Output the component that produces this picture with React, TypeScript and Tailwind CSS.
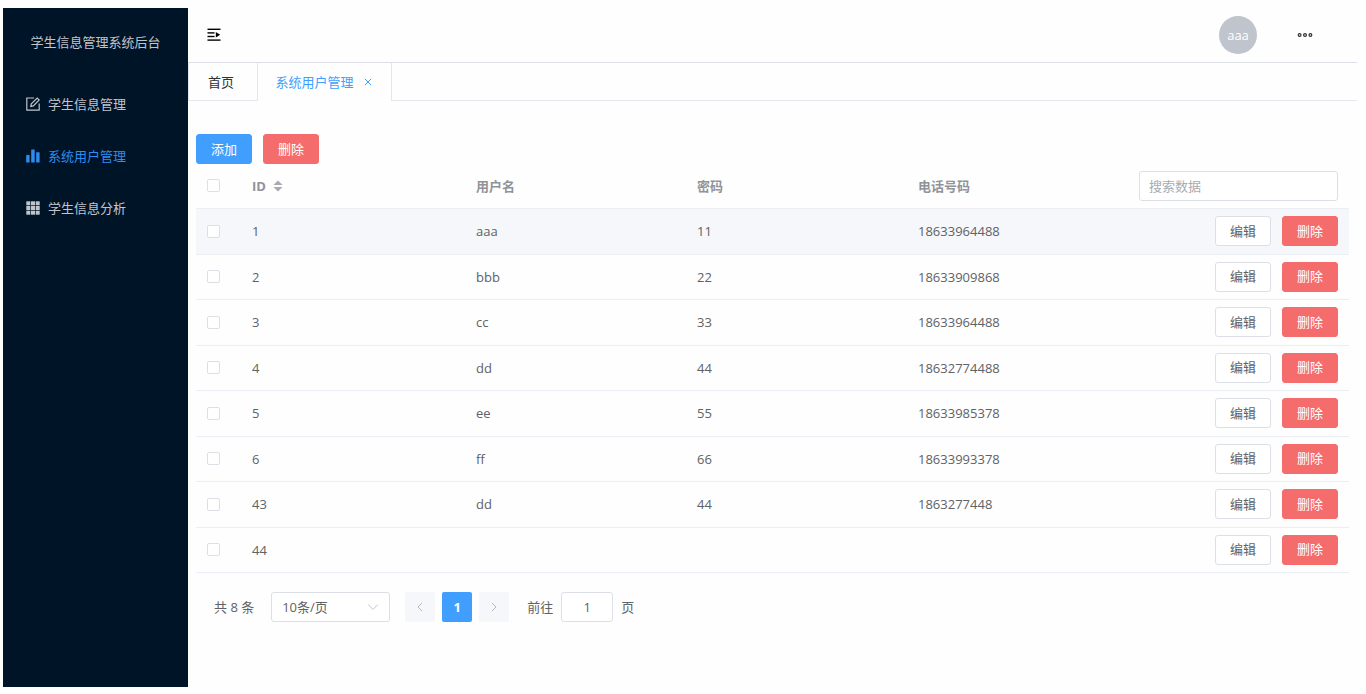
import { useState } from "react";
import type { ReactNode } from "react";

type User = {
  id: number;
  name: string;
  password: string;
  phone: string;
};

const users: User[] = [
  { id: 1, name: "aaa", password: "11", phone: "18633964488" },
  { id: 2, name: "bbb", password: "22", phone: "18633909868" },
  { id: 3, name: "cc", password: "33", phone: "18633964488" },
  { id: 4, name: "dd", password: "44", phone: "18632774488" },
  { id: 5, name: "ee", password: "55", phone: "18633985378" },
  { id: 6, name: "ff", password: "66", phone: "18633993378" },
  { id: 43, name: "dd", password: "44", phone: "1863277448" },
  { id: 44, name: "", password: "", phone: "" },
];

function EditIcon() {
  return (
    <svg viewBox="0 0 14 14" className="size-[14px]" fill="none" stroke="currentColor" strokeWidth="1.2">
      <path d="M8 1H0.8v12.2h12.4V6.4" />
      <path d="M4.8 9.4l.5-2.5L11.2 1l2 2-5.9 5.9z" />
    </svg>
  );
}

function BarsIcon() {
  return (
    <svg viewBox="0 0 14 14" className="size-[14px]" fill="currentColor">
      <rect x="0.2" y="6" width="3.4" height="7.6" rx="0.4" />
      <rect x="5.2" y="0.4" width="3.5" height="13.2" rx="0.4" />
      <rect x="10.2" y="3.2" width="3.4" height="10.4" rx="0.4" />
    </svg>
  );
}

function GridIcon() {
  return (
    <svg viewBox="0 0 14 14" className="size-[14px]" fill="currentColor">
      {[0.3, 5, 9.7].map((y) =>
        [0.3, 5, 9.7].map((x) => <rect key={`${x}-${y}`} x={x} y={y} width="4" height="4" />)
      )}
    </svg>
  );
}

function UnfoldIcon() {
  return (
    <svg viewBox="0 0 14 14" className="size-[14px]" fill="currentColor">
      <rect x="0.5" y="0.6" width="13" height="1.4" />
      <rect x="0.5" y="4.2" width="7" height="1.4" />
      <rect x="0.5" y="7.8" width="7" height="1.4" />
      <rect x="0.5" y="11.4" width="13" height="1.4" />
      <path d="M8.8 3.9l4.4 2.8-4.4 2.8z" />
    </svg>
  );
}

function MoreIcon() {
  return (
    <svg viewBox="0 0 16 6" className="h-[6px] w-[16px]" fill="none" stroke="currentColor" strokeWidth="1.2">
      <circle cx="2.6" cy="3" r="1.4" />
      <circle cx="8" cy="3" r="1.4" />
      <circle cx="13.4" cy="3" r="1.4" />
    </svg>
  );
}

function Chevron({ d, className }: { d: string; className?: string }) {
  return (
    <svg
      viewBox="0 0 12 12"
      className={["size-[12px]", className ?? ""].join(" ")}
      fill="none"
      stroke="currentColor"
      strokeWidth="1"
    >
      <path d={d} />
    </svg>
  );
}

const buttonKinds = {
  primary: "border-[#409eff] bg-[#409eff] text-white",
  danger: "border-[#f56c6c] bg-[#f56c6c] text-white",
  plain: "border-[#dcdfe6] bg-white text-[#606266]",
};

function Button({
  kind,
  onClick,
  children,
}: {
  kind: keyof typeof buttonKinds;
  onClick?: () => void;
  children: ReactNode;
}) {
  return (
    <button
      type="button"
      onClick={onClick}
      className={["h-[30px] w-14 cursor-pointer rounded-[3px] border pb-px leading-4", buttonKinds[kind]].join(" ")}
    >
      {children}
    </button>
  );
}

function Checkbox({ label, checked, onChange }: { label: string; checked: boolean; onChange: () => void }) {
  return (
    <input
      type="checkbox"
      aria-label={label}
      checked={checked}
      onChange={onChange}
      className="block size-[13px] appearance-none rounded-[2px] border border-[#dcdfe6] bg-white checked:border-[#409eff] checked:bg-[#409eff]"
    />
  );
}

const menu = [
  { label: "学生信息管理", icon: <EditIcon />, active: false },
  { label: "系统用户管理", icon: <BarsIcon />, active: true },
  { label: "学生信息分析", icon: <GridIcon />, active: false },
];

function Sidebar() {
  return (
    <aside className="w-[185px] shrink-0 bg-[#001428] text-[#c0c4cc]">
      <h1 className="h-[70px] text-center leading-[68px]">学生信息管理系统后台</h1>
      <nav>
        {menu.map((item) => (
          <a
            key={item.label}
            href="#"
            className={["flex h-[52px] items-center gap-2 pl-[23px]", item.active ? "text-[#2d8cf0]" : ""].join(" ")}
          >
            {item.icon}
            {item.label}
          </a>
        ))}
      </nav>
    </aside>
  );
}

function Header() {
  return (
    <header className="flex h-[55px] items-center border-b border-[#dcdfe6] pr-[44px] pl-[19px]">
      <button type="button" aria-label="展开菜单" className="cursor-pointer text-black">
        <UnfoldIcon />
      </button>
      <span className="ml-auto flex size-[38px] items-center justify-center rounded-full bg-[#c0c4cc] text-white">
        aaa
      </span>
      <button type="button" aria-label="更多" className="ml-10 cursor-pointer text-[#303133]">
        <MoreIcon />
      </button>
    </header>
  );
}

function Tabs() {
  return (
    <div role="tablist" className="flex h-[38px]">
      <button
        type="button"
        role="tab"
        aria-selected="false"
        className="w-[69px] cursor-pointer border-b border-l border-[#e4e7ed] pr-1 text-[#303133]"
      >
        首页
      </button>
      <button
        type="button"
        role="tab"
        aria-selected="true"
        className="flex w-[135px] cursor-pointer items-center justify-center gap-2 border-x border-[#e4e7ed] text-[#409eff]"
      >
        系统用户管理
        <Chevron d="M2.8 2.8l6.4 6.4M9.2 2.8L2.8 9.2" />
      </button>
      <div className="flex-1 border-b border-[#e4e7ed]" />
    </div>
  );
}

function Pagination() {
  return (
    <div className="mt-[19px] flex items-center pl-[18px] text-[#606266]">
      <span>共 8 条</span>
      <div className="relative ml-[17px]">
        <select
          aria-label="每页条数"
          className="h-[30px] w-[119px] appearance-none rounded-[3px] border border-[#dcdfe6] bg-white pl-[10px]"
        >
          <option>10条/页</option>
          <option>20条/页</option>
        </select>
        <Chevron
          d="M1.2 3.6L6 8.4l4.8-4.8"
          className="pointer-events-none absolute top-[9px] right-[11px] text-[#c0c4cc]"
        />
      </div>
      <div className="ml-[15px] flex gap-[7px]">
        <button
          type="button"
          aria-label="上一页"
          disabled
          className="flex size-[30px] items-center justify-center rounded-[2px] bg-[#f5f7fa] text-[#b4b8c0]"
        >
          <Chevron d="M8 2L4 6l4 4" />
        </button>
        <button type="button" className="size-[30px] rounded-[2px] bg-[#409eff] font-bold text-white">
          1
        </button>
        <button
          type="button"
          aria-label="下一页"
          disabled
          className="flex size-[30px] items-center justify-center rounded-[2px] bg-[#f5f7fa] text-[#b4b8c0]"
        >
          <Chevron d="M4 2l4 4-4 4" />
        </button>
      </div>
      <label className="ml-[18px] flex items-center gap-2">
        前往
        <input
          type="text"
          defaultValue="1"
          className="h-[30px] w-[52px] rounded-[3px] border border-[#dcdfe6] bg-white text-center"
        />
        页
      </label>
    </div>
  );
}

export default function App() {
  const [selected, setSelected] = useState<number[]>([]);
  const allSelected = selected.length === users.length;

  const toggle = (id: number) =>
    setSelected((prev) => (prev.includes(id) ? prev.filter((s) => s !== id) : [...prev, id]));

  return (
    <div className="flex min-h-screen bg-[#fefefe] pt-2 pr-[9px] pb-[7px] pl-[3px] font-['Open_Sans','Noto_Sans_CJK_SC',sans-serif] text-[13px] leading-[18px]">
      <Sidebar />
      <div className="min-w-0 flex-1">
        <Header />
        <Tabs />
        <main className="pt-[33px] pr-2 pl-2">
          <div className="flex gap-[11px]">
            <Button kind="primary">添加</Button>
            <Button kind="danger">删除</Button>
          </div>
          <table className="w-full table-fixed text-left text-[#606266]">
            <thead className="text-[#909399]">
              <tr className="h-[44px] border-b border-[#ebeef5]">
                <th className="w-[47px] pl-[11px]">
                  <Checkbox
                    label="全选"
                    checked={allSelected}
                    onChange={() => setSelected(allSelected ? [] : users.map((u) => u.id))}
                  />
                </th>
                <th className="w-[224px] pl-[9px]" aria-sort="none">
                  <button type="button" className="flex cursor-pointer items-center gap-[7px] font-bold">
                    ID
                    <svg viewBox="0 0 10 12" className="h-[12px] w-[10px]" fill="#a8abb3">
                      <path d="M5 0.5l4.6 4.6H0.4zM5 11.5L0.4 6.9h9.2z" />
                    </svg>
                  </button>
                </th>
                <th className="pl-[9px]">用户名</th>
                <th className="pl-[9px]">密码</th>
                <th className="pl-[9px]">电话号码</th>
                <th className="w-[219px] pr-[11px] pl-[9px]">
                  <input
                    type="text"
                    aria-label="搜索数据"
                    placeholder="搜索数据"
                    className="block h-[30px] w-full rounded-[3px] border border-[#dcdfe6] bg-white px-[9px] font-normal text-[#606266] placeholder:text-[#a8abb3]"
                  />
                </th>
              </tr>
            </thead>
            <tbody>
              {users.map((user) => (
                <tr
                  key={user.id}
                  className="border-b border-[#ebeef5] odd:h-[46px] even:h-[45px] first:bg-[#f5f7fa]"
                >
                  <td className="pl-[11px]">
                    <Checkbox
                      label={`选择 ${user.id}`}
                      checked={selected.includes(user.id)}
                      onChange={() => toggle(user.id)}
                    />
                  </td>
                  <td className="pl-[9px]">{user.id}</td>
                  <td className="pl-[9px]">{user.name}</td>
                  <td className="pl-[9px]">{user.password}</td>
                  <td className="pl-[9px]">{user.phone}</td>
                  <td className="pr-[11px]">
                    <div className="flex justify-end gap-[11px]">
                      <Button kind="plain">编辑</Button>
                      <Button kind="danger">删除</Button>
                    </div>
                  </td>
                </tr>
              ))}
            </tbody>
          </table>
          <Pagination />
        </main>
      </div>
    </div>
  );
}
